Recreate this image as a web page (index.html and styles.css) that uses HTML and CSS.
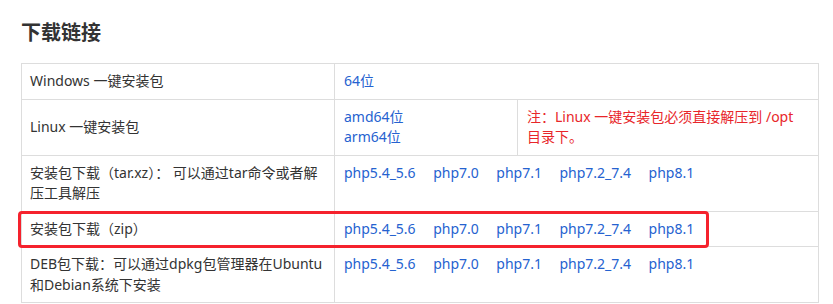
FILE: index.html
```html
<!DOCTYPE html>
<html lang="zh-CN">
<head>
<meta charset="utf-8">
<title>下载链接</title>
<link rel="stylesheet" href="styles.css">
</head>
<body>
<div class="page">
  <h2 class="title">下载链接</h2>
  <div class="table-wrap">
    <table class="dl">
      <colgroup>
        <col class="c1"><col class="c2"><col class="c3">
      </colgroup>
      <tr class="r1">
        <td>Windows 一键安装包</td>
        <td colspan="2"><a href="#">64位</a></td>
      </tr>
      <tr class="r2">
        <td>Linux 一键安装包</td>
        <td><a href="#">amd64位</a><br><a href="#">arm64位</a></td>
        <td class="note">注：Linux 一键安装包必须直接解压到 /opt 目录下。</td>
      </tr>
      <tr class="r2">
        <td>安装包下载（tar.xz）： 可以通过tar命令或者解压工具解压</td>
        <td colspan="2"><div class="links"><a href="#">php5.4_5.6</a><a href="#">php7.0</a><a href="#">php7.1</a><a href="#">php7.2_7.4</a><a href="#">php8.1</a></div><div class="spacer"></div></td>
      </tr>
      <tr class="r1">
        <td>安装包下载（zip）</td>
        <td colspan="2"><div class="links"><a href="#">php5.4_5.6</a><a href="#">php7.0</a><a href="#">php7.1</a><a href="#">php7.2_7.4</a><a href="#">php8.1</a></div></td>
      </tr>
      <tr class="r2">
        <td>DEB包下载：可以通过dpkg包管理器在Ubuntu和Debian系统下安装</td>
        <td colspan="2"><div class="links"><a href="#">php5.4_5.6</a><a href="#">php7.0</a><a href="#">php7.1</a><a href="#">php7.2_7.4</a><a href="#">php8.1</a></div><div class="spacer"></div></td>
      </tr>
    </table>
    <div class="highlight"></div>
  </div>
</div>
</body>
</html>
```
FILE: styles.css
```css
html, body {
  margin: 0;
  padding: 0;
  background: #fff;
}
.page {
  padding: 18px 0 0 21px;
  font-family: "Noto Sans", "Noto Sans CJK SC", sans-serif;
  color: #333;
  font-size: 14px;
}
.title {
  margin: 0 0 17px 0;
  font-size: 20px;
  line-height: 28px;
  font-weight: bold;
  font-family: "Noto Sans CJK SC", "Noto Sans", sans-serif;
  color: #333;
}
.table-wrap {
  position: relative;
  width: 797px;
}
.dl {
  border-collapse: collapse;
  width: 797px;
  table-layout: fixed;
}
.c1 { width: 313px; }
.c2 { width: 183px; }
.c3 { width: 301px; }
.dl td {
  border: 1px solid #dddddd;
  padding: 7px 9px 7px 9px;
  line-height: 20.5px;
  vertical-align: top;
  font-family: "Noto Sans", "Noto Sans CJK SC", sans-serif;
}
.dl tr.r1 td { vertical-align: middle; }
.dl tr.r2 td:first-child { vertical-align: middle; }
.dl tr td:first-child { padding-left: 8px; padding-right: 8px; }
.dl a {
  color: #2562d0;
  text-decoration: none;
}
.note {
  color: #e8262a;
  vertical-align: middle !important;
}
.links {
  display: flex;
  gap: 17.5px;
}
.spacer { height: 20px; }
.highlight {
  position: absolute;
  left: -3px;
  top: 148px;
  width: 691px;
  height: 37px;
  box-sizing: border-box;
  border: 3px solid #f5222d;
  border-radius: 4px;
  pointer-events: none;
}
```
